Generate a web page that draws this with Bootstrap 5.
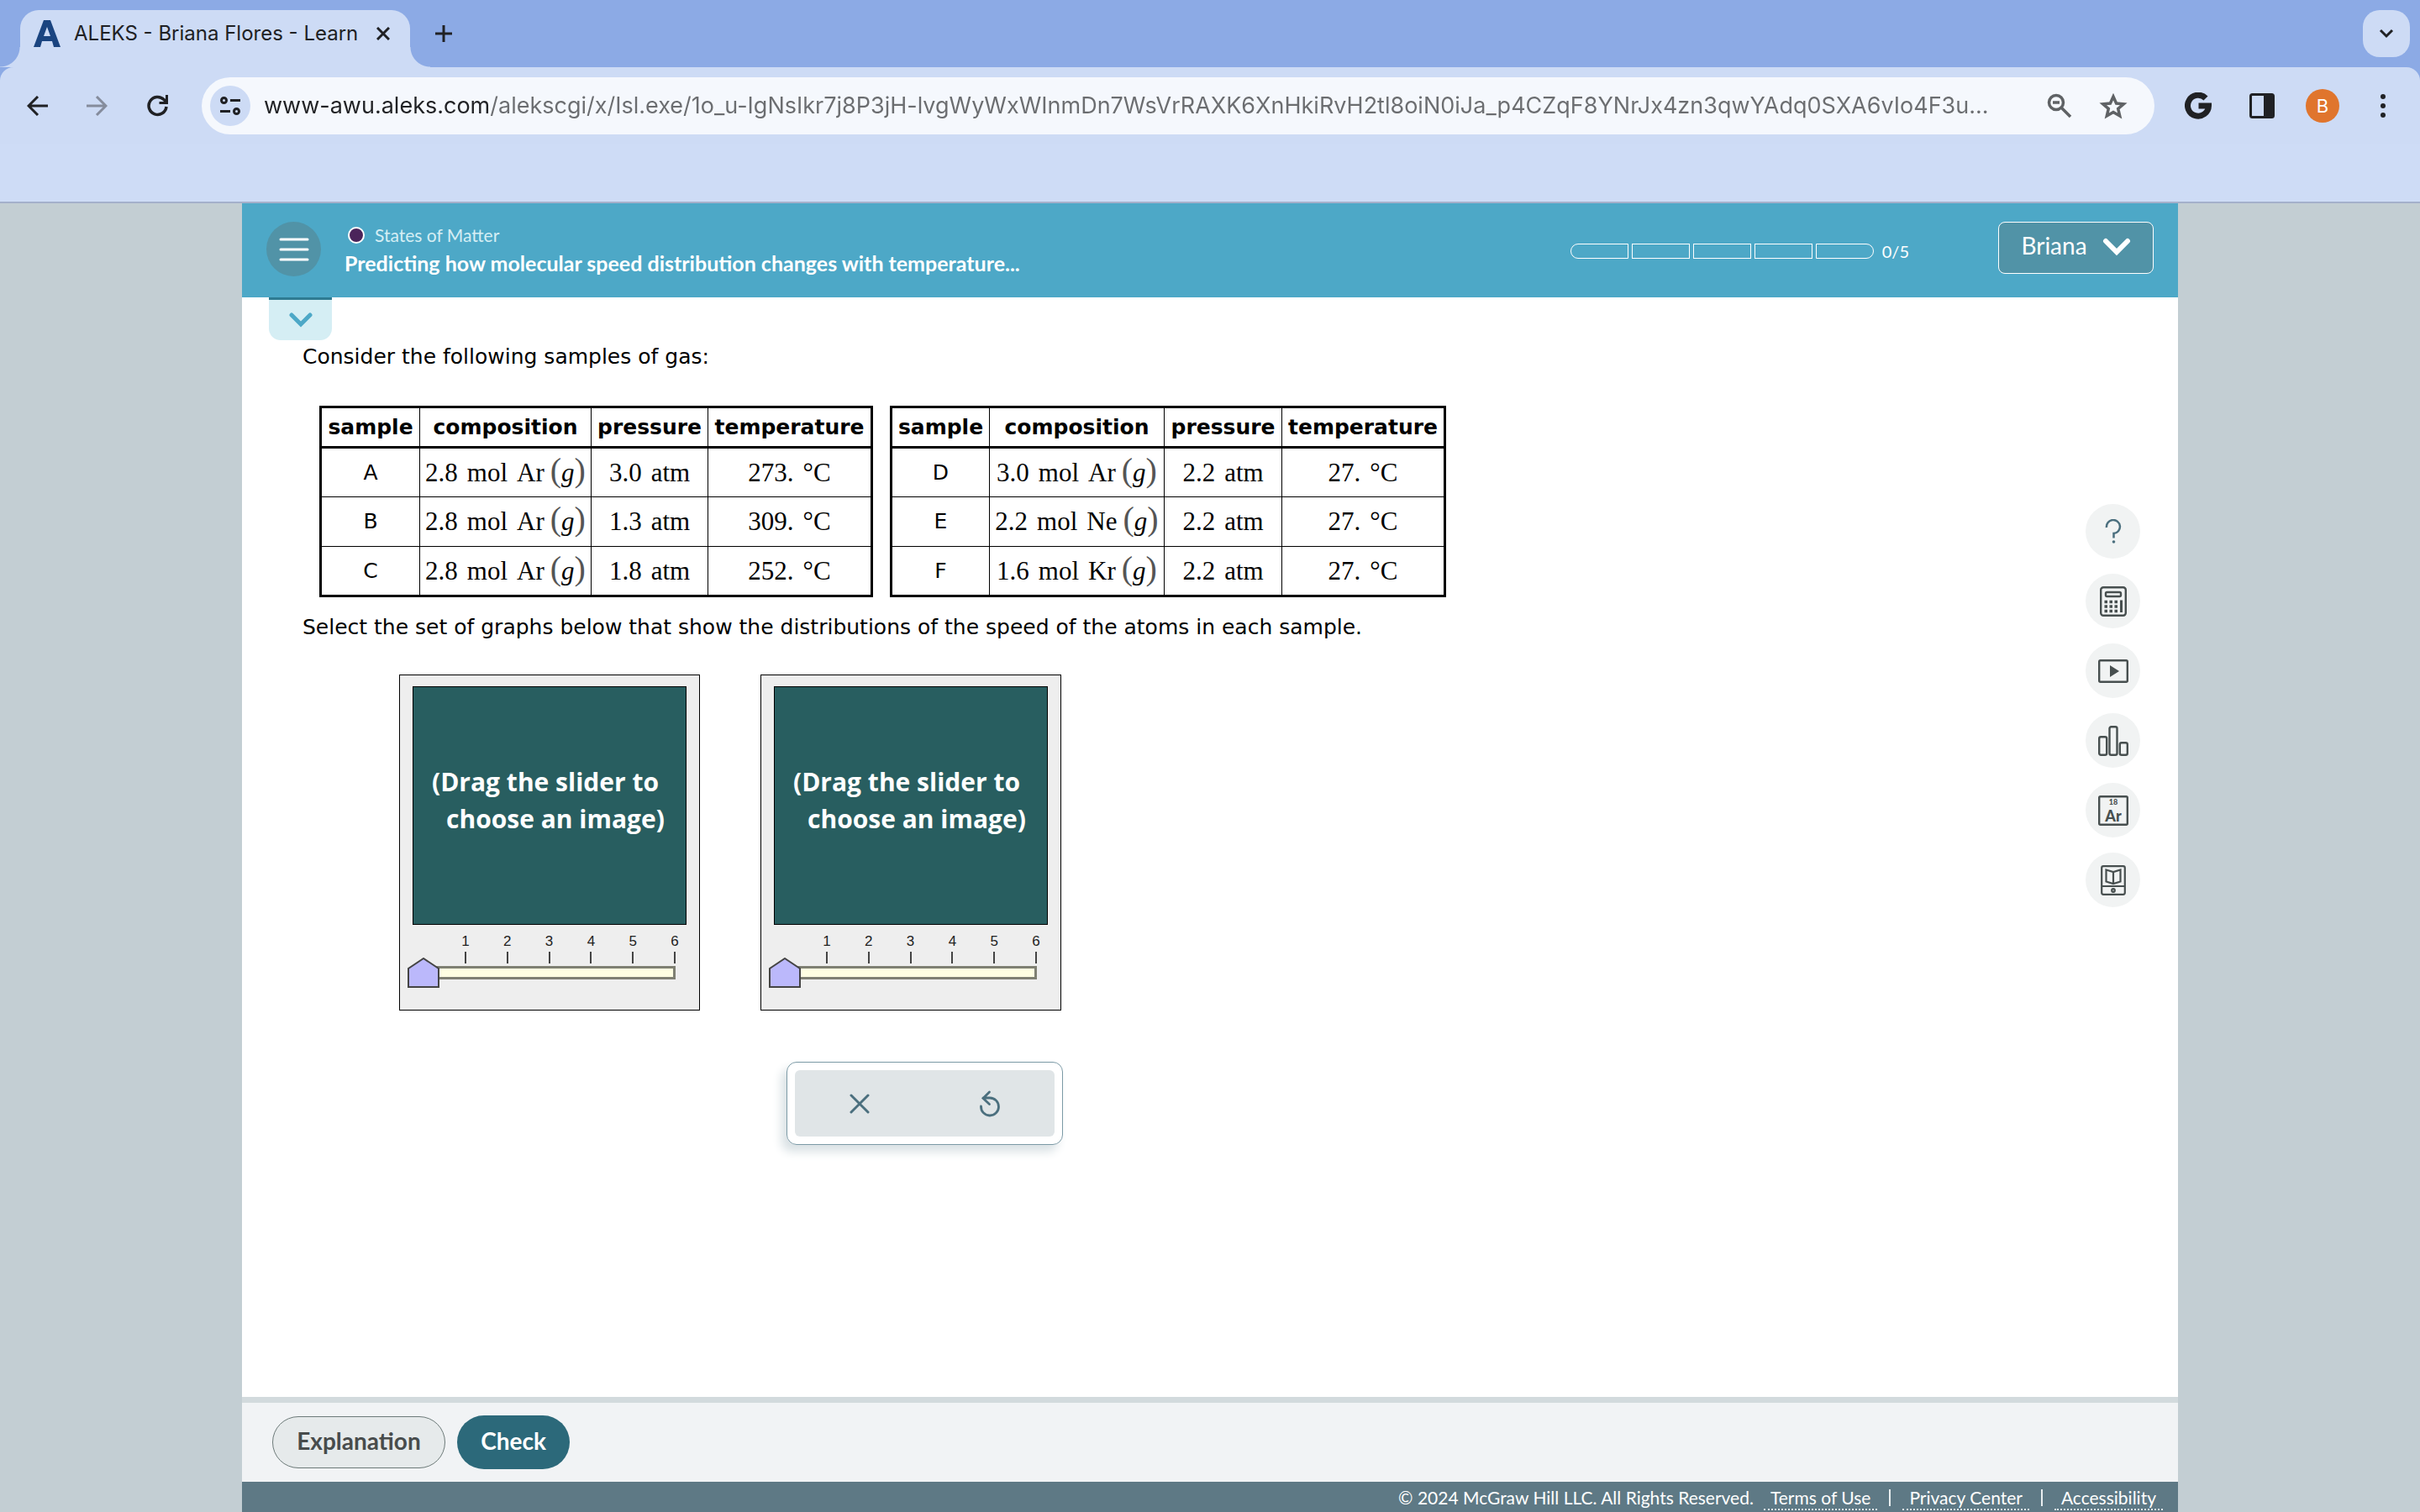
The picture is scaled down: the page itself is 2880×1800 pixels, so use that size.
<!DOCTYPE html>
<html lang="en">
<head>
<meta charset="utf-8">
<meta name="viewport" content="width=device-width, initial-scale=1">
<title>ALEKS - Briana Flores - Learn</title>
<link href="https://cdn.jsdelivr.net/npm/bootstrap@5.3.0/dist/css/bootstrap.min.css" rel="stylesheet">
<style>
  :root { --strip:#8caae5; --chrome:#cddbf5; --ink:#202124; --teal:#4da8c7; --slate:#4b6f7e; }
  body { background:#c3ced3; font-family:Lato, sans-serif; }
  svg { display:block; fill:none; }
  button { border:0; padding:0; background:none; color:inherit; }

  /* browser window */
  .tab-strip { background:var(--strip); height:80px; padding:12px 12px 0 24px; }
  .browser-tab { position:relative; height:68px; width:464px; padding:0 24px 12px 16px; background:var(--chrome); border-radius:22px 22px 0 0; font:24px/32px Inter, sans-serif; color:var(--ink); }
  .browser-tab::before, .browser-tab::after { content:""; position:absolute; bottom:0; width:24px; height:24px; }
  .browser-tab::before { right:100%; background:radial-gradient(circle at 0 0, transparent 23px, var(--chrome) 24px); }
  .browser-tab::after { left:100%; background:radial-gradient(circle at 100% 0, transparent 23px, var(--chrome) 24px); }
  .new-tab { margin:18px 0 0 30px; height:20px; }
  .tab-search { width:56px; height:56px; border-radius:20px; background:var(--chrome); }
  .toolbar-wrap { background:var(--strip); }
  .toolbar { background:var(--chrome); border-radius:16px 16px 0 0; height:92px; padding:12px 41px 12px 32px; }
  .forward-btn { margin-left:46px; }
  .reload-btn { margin-left:47px; }
  .panel-btn { margin-left:45px; }
  .menu-btn { margin-left:49px; }
  .address { height:68px; border-radius:34px; background:#f5f8fd; padding:0 32px 0 10px; margin:0 36px 0 38px; min-width:0; }
  .site-info { width:48px; height:48px; border-radius:50%; background:var(--chrome); }
  .url { min-width:0; border:0; outline:0; padding:0 0 0 16px; font:27px/40px Inter, sans-serif; color:transparent; background:linear-gradient(to right, var(--ink) 286px, #6b6d70 286px); -webkit-background-clip:text; background-clip:text; }
  .avatar { width:40px; height:40px; margin-left:37px; border-radius:50%; background:#e0752d; color:#fff; font:22px/40px Inter, sans-serif; }
  .bookmarks { background:#cedcf6; height:70px; border-bottom:2px solid #a4b0cb; }

  /* lesson */
  .lesson { width:80%; min-height:0; }
  .lesson-head { background:var(--teal); height:112px; padding:22px 29px 0; }
  .round-menu { width:65px; height:65px; border-radius:50%; background:#5193a7; }
  .titles { margin:3px 0 0 28px; }
  .topic-line { font-size:21px; line-height:26px; gap:12px; padding-left:4px; color:#d5eef4; }
  .topic-dot { width:20px; height:20px; border:2px solid #fff; border-radius:50%; background:#4b245a; }
  .lesson-name { font-size:25px; line-height:34px; font-weight:700; margin:3px 0 0; color:#fff; }
  .steps { gap:4px; margin:26px 106px 0 0; color:#fff; }
  .step { width:69px; height:18px; border:1px solid #fff; }
  .step:first-child { border-radius:9px 0 0 9px; }
  .step:nth-child(5) { border-radius:0 9px 9px 0; }
  .step-count { font-size:20px; line-height:18px; margin-left:6px; }
  .user-btn { width:185px; height:62px; padding-bottom:6px; gap:18px; border:1px solid #fff; border-radius:8px; background:#5193a7; color:#fff; font-size:28px; }
  .work { background:#fff; min-height:0; }
  .pull { width:75px; height:51px; margin-left:32px; background:#d5eef4; border-top:3px solid #2f7b92; border-radius:0 0 14px 14px; }
  .question { padding-left:72px; font:25px/32px "DejaVu Sans", sans-serif; color:#000; }
  .question p { margin:0; }
  .intro { padding-top:4px; }
  .samples { gap:20px; margin:42px 0 20px 20px; }
  .sample-table { border-collapse:collapse; table-layout:fixed; border:3px solid #000; text-align:center; }
  .sample-table th, .sample-table td { border:1px solid #000; padding:0; white-space:nowrap; }
  .sample-table th { height:48px; font-weight:700; text-align:center; border-bottom:3px solid #000; }
  .sample-table tbody th { height:59px; font-weight:400; border-bottom:1px solid #000; }
  .sample-table tbody tr:last-child > * { border-bottom:3px solid #000; }
  .chem { display:inline-flex; align-items:baseline; gap:11px; font:31px/40px "Liberation Serif", serif; }
  .state { margin-left:-4px; }
  .state b { font-weight:400; font-size:40px; line-height:30px; color:#555; }
  .choices { gap:72px; margin:40px 0 0 115px; }
  .picker { width:358px; height:400px; border:1px solid #000; background:#eee; padding:13px 0 0; }
  .board { margin:0 15px; height:284px; border:1px solid #000; background:#285e60; color:#fff; padding:91px 0 0 22px; font:700 30px/44px "Open Sans", sans-serif; white-space:nowrap; }
  .board span { display:block; }
  .board span + span { padding-left:17px; }
  .scale { display:grid; grid-template-columns:repeat(6, 1fr); width:299px; margin:12px 0 0 53px; font:17px/16px "Liberation Sans", sans-serif; color:#222; text-align:center; }
  .scale span::after { content:""; display:block; width:2px; height:14px; margin:4px auto 0; background:#444; }
  .picker input { -webkit-appearance:none; appearance:none; display:block; width:338px; height:36px; margin:-7px 0 0 9px; background:none; position:relative; }
  .picker input::-webkit-slider-runnable-track { height:36px; background:linear-gradient(#ffffe2,#ffffe2) center/294px 10px no-repeat, linear-gradient(#7f8073,#7f8073) center/300px 16px no-repeat; }
  .picker input::-webkit-slider-thumb { -webkit-appearance:none; width:38px; height:36px; background:url("data:image/svg+xml,%3Csvg xmlns='http://www.w3.org/2000/svg' width='38' height='36'%3E%3Cpath d='M1 35V13L19 1l18 12v22z' fill='%23bbb8fb' stroke='%23444' stroke-width='2'/%3E%3C/svg%3E"); }
  .actions { width:329px; height:99px; margin:61px 0 0 576px; padding:9px; border:1px solid #7c9aa6; border-radius:12px; box-shadow:-6px 8px 12px #d9e1e4; }
  .actions > div { height:79px; border-radius:6px; background:#e0e5e7; }
  .rail { gap:18px; margin:246px 45px 0 auto; }
  .rail button { width:65px; height:65px; border-radius:50%; background:#f1f3f3; }
  .submit-bar { height:101px; border-top:7px solid #d2dadd; background:#f1f3f5; padding:0 36px; gap:14px; }
  .pill { border-radius:32px; font-size:28px; font-weight:700; line-height:32px; padding:12px 26px 16px; }
  .pill-light { border:1px solid #6d7a79; background:#e6eaeb; color:#484c4c; min-width:206px; }
  .pill-dark { background:#2c697a; color:#fff; height:64px; min-width:134px; }
  .legal { height:36px; background:#5e7985; color:#fff; padding:6px 18px 0; font-size:21px; line-height:26px; }
  .legal a { color:#fff; text-decoration:none; border-bottom:2px dotted #dfe6e8; padding:0 8px; height:28px; }
  .legal i { width:2px; height:20px; background:#e8eef0; margin:3px 14px 0; }
</style>
</head>
<body class="vh-100 overflow-hidden d-flex flex-column">

<header>
  <div class="tab-strip d-flex align-items-start">
    <div class="browser-tab d-flex align-items-center">
      <svg class="flex-shrink-0" width="32" height="32" viewBox="0 0 32 32"><path d="M12 0h8l12 32h-8l-2-7H10l-2 7H0zM16 8l-4 11h8z" fill="#1a4480" fill-rule="evenodd"/></svg>
      <span class="text-nowrap ms-3">ALEKS - Briana Flores - Learn</span>
      <button class="ms-auto" aria-label="Close tab"><svg width="16" height="16" viewBox="0 0 16 16"><path d="M1 1l14 14M15 1L1 15" stroke="#202124" stroke-width="3"/></svg></button>
    </div>
    <button class="new-tab" aria-label="New tab"><svg width="20" height="20"><path d="M10 0v20M0 10h20" stroke="#202124" stroke-width="3"/></svg></button>
    <button class="tab-search ms-auto d-flex align-items-center justify-content-center" aria-label="Search tabs"><svg width="18" height="12"><path d="M2 2l7 7 7-7" stroke="#202124" stroke-width="3"/></svg></button>
  </div>
  <div class="toolbar-wrap">
    <div class="toolbar d-flex align-items-center">
      <button aria-label="Back"><svg width="25" height="24"><path d="M25 12H3M13 1L2 12l11 11" stroke="#202124" stroke-width="3"/></svg></button>
      <button class="forward-btn" aria-label="Forward"><svg width="25" height="24"><path d="M0 12h22M12 1l11 11-11 11" stroke="#858c9c" stroke-width="3"/></svg></button>
      <button class="reload-btn" aria-label="Reload"><svg width="27" height="26" viewBox="0 0 27 26"><path d="M23 14A10.500 10.500 0 1 1 20 5.500l3 3" stroke="#202124" stroke-width="3.500"/><path d="M25 0v11H14.500V8H22V0z" fill="#202124"/></svg></button>
      <div class="address d-flex align-items-center flex-fill">
        <button class="site-info d-flex align-items-center justify-content-center flex-shrink-0" aria-label="Site information"><svg width="24" height="22"><circle cx="4.500" cy="4.500" r="3" stroke="#202124" stroke-width="3"/><circle cx="19.500" cy="17.500" r="3" stroke="#202124" stroke-width="3"/><path d="M12 4.500h12M0 17.500h12" stroke="#202124" stroke-width="3"/></svg></button>
        <input class="url flex-fill" type="text" aria-label="Address" value="www-awu.aleks.com/alekscgi/x/Isl.exe/1o_u-IgNsIkr7j8P3jH-lvgWyWxWInmDn7WsVrRAXK6XnHkiRvH2tl8oiN0iJa_p4CZqF8YNrJx4zn3qwYAdq0SXA6vIo4F3u...">
        <button class="me-4 ms-3" aria-label="Zoom"><svg width="30" height="30"><circle cx="11" cy="11" r="8.500" stroke="#5f6265" stroke-width="3.500"/><path d="M17 17l11 11M7 11h8" stroke="#5f6265" stroke-width="3.500"/></svg></button>
        <button class="ms-2" aria-label="Bookmark"><svg width="34" height="32" viewBox="0 0 34 32"><path d="M17 5l3.600 8 8.700.8-6.600 5.700 2 8.500-7.700-4.500L9.300 28l2-8.500-6.600-5.700 8.700-.8z" stroke="#5f6265" stroke-width="3.500"/></svg></button>
      </div>
      <button aria-label="Google"><svg width="32" height="32"><path d="M25 7A12.500 12.500 0 1 0 28.500 16H16.500" stroke="#202124" stroke-width="7"/></svg></button>
      <button class="panel-btn" aria-label="Side panel"><svg width="30" height="30"><rect x="1.500" y="1.500" width="27" height="27" rx="2" stroke="#202124" stroke-width="3"/><path d="M17 1h10v28H17z" fill="#202124"/></svg></button>
      <button class="avatar text-center" aria-label="Profile">B</button>
      <button class="menu-btn" aria-label="Menu"><svg width="6" height="28"><g fill="#202124"><circle cx="3" cy="3" r="3"/><circle cx="3" cy="14" r="3"/><circle cx="3" cy="25" r="3"/></g></svg></button>
    </div>
  </div>
  <div class="bookmarks"></div>
</header>

<div class="lesson mx-auto flex-fill d-flex flex-column">
  <div class="lesson-head d-flex align-items-start">
    <button class="round-menu d-flex align-items-center justify-content-center" aria-label="Menu"><svg width="36" height="28"><path d="M2 2h32M2 14h32M2 26h32" stroke="#fff" stroke-width="3" stroke-linecap="round"/></svg></button>
    <div class="titles">
      <div class="topic-line d-flex align-items-center"><span class="topic-dot"></span><span>States of Matter</span></div>
      <h1 class="lesson-name">Predicting how molecular speed distribution changes with temperature...</h1>
    </div>
    <div class="steps d-flex ms-auto">
      <span class="step"></span><span class="step"></span><span class="step"></span><span class="step"></span><span class="step"></span>
      <span class="step-count">0/5</span>
    </div>
    <button class="user-btn d-flex align-items-center justify-content-center">Briana <svg class="mt-1" width="34" height="22"><path d="M4 4l13 13L30 4" stroke="#fff" stroke-width="6" stroke-linecap="round"/></svg></button>
  </div>

  <main class="work flex-fill d-flex">
    <div>
      <button class="pull d-flex align-items-center justify-content-center" aria-label="Show details"><svg width="28" height="18"><path d="M3 3l11 11L25 3" stroke="#4da8c7" stroke-width="5" stroke-linecap="round"/></svg></button>
      <div class="question">
        <p class="intro">Consider the following samples of gas:</p>
        <div class="samples d-flex">
          <table class="sample-table">
            <colgroup><col style="width:118px"><col style="width:204px"><col style="width:139px"><col style="width:195px"></colgroup>
            <thead><tr><th>sample</th><th>composition</th><th>pressure</th><th>temperature</th></tr></thead>
            <tbody>
              <tr><th>A</th><td><span class="chem"><span>2.8</span> <span>mol</span> <span>Ar</span> <span class="state"><b>(</b><em>g</em><b>)</b></span></span></td><td><span class="chem"><span>3.0</span> <span>atm</span></span></td><td><span class="chem"><span>273.</span> <span>°C</span></span></td></tr>
              <tr><th>B</th><td><span class="chem"><span>2.8</span> <span>mol</span> <span>Ar</span> <span class="state"><b>(</b><em>g</em><b>)</b></span></span></td><td><span class="chem"><span>1.3</span> <span>atm</span></span></td><td><span class="chem"><span>309.</span> <span>°C</span></span></td></tr>
              <tr><th>C</th><td><span class="chem"><span>2.8</span> <span>mol</span> <span>Ar</span> <span class="state"><b>(</b><em>g</em><b>)</b></span></span></td><td><span class="chem"><span>1.8</span> <span>atm</span></span></td><td><span class="chem"><span>252.</span> <span>°C</span></span></td></tr>
            </tbody>
          </table>
          <table class="sample-table">
            <colgroup><col style="width:117px"><col style="width:208px"><col style="width:140px"><col style="width:194px"></colgroup>
            <thead><tr><th>sample</th><th>composition</th><th>pressure</th><th>temperature</th></tr></thead>
            <tbody>
              <tr><th>D</th><td><span class="chem"><span>3.0</span> <span>mol</span> <span>Ar</span> <span class="state"><b>(</b><em>g</em><b>)</b></span></span></td><td><span class="chem"><span>2.2</span> <span>atm</span></span></td><td><span class="chem"><span>27.</span> <span>°C</span></span></td></tr>
              <tr><th>E</th><td><span class="chem"><span>2.2</span> <span>mol</span> <span>Ne</span> <span class="state"><b>(</b><em>g</em><b>)</b></span></span></td><td><span class="chem"><span>2.2</span> <span>atm</span></span></td><td><span class="chem"><span>27.</span> <span>°C</span></span></td></tr>
              <tr><th>F</th><td><span class="chem"><span>1.6</span> <span>mol</span> <span>Kr</span> <span class="state"><b>(</b><em>g</em><b>)</b></span></span></td><td><span class="chem"><span>2.2</span> <span>atm</span></span></td><td><span class="chem"><span>27.</span> <span>°C</span></span></td></tr>
            </tbody>
          </table>
        </div>
        <p>Select the set of graphs below that show the distributions of the speed of the atoms in each sample.</p>
        <div class="choices d-flex">
          <div class="picker">
            <label class="board d-block" for="set1"><span>(Drag the slider to</span><span>choose an image)</span></label>
            <div class="scale"><span>1</span><span>2</span><span>3</span><span>4</span><span>5</span><span>6</span></div>
            <input id="set1" type="range" min="0" max="6" value="0">
          </div>
          <div class="picker">
            <label class="board d-block" for="set2"><span>(Drag the slider to</span><span>choose an image)</span></label>
            <div class="scale"><span>1</span><span>2</span><span>3</span><span>4</span><span>5</span><span>6</span></div>
            <input id="set2" type="range" min="0" max="6" value="0">
          </div>
        </div>
        <div class="actions">
          <div class="d-flex">
            <button class="w-50 d-flex align-items-center justify-content-center" aria-label="Clear"><svg width="24" height="24"><path d="M2 2l20 20M22 2L2 22" stroke="#4b6f7e" stroke-width="3" stroke-linecap="round"/></svg></button>
            <button class="w-50 d-flex align-items-center justify-content-center" aria-label="Undo"><svg width="26" height="32"><path d="M2.500 19A10.500 10.500 0 1 0 13 9H5M12.500 2L5 9.500l7.500 7" stroke="#4b6f7e" stroke-width="2.800" stroke-linecap="round"/></svg></button>
          </div>
        </div>
      </div>
    </div>
    <nav class="rail d-flex flex-column" aria-label="Tools">
      <button class="d-flex align-items-center justify-content-center" aria-label="Help"><svg width="20" height="30"><path d="M2 10a8 8 0 1 1 8.500 7v5.500" stroke="#4b6f7e" stroke-width="2.500"/><circle cx="10.500" cy="27" r="1.800" fill="#4b6f7e"/></svg></button>
      <button class="d-flex align-items-center justify-content-center" aria-label="Calculator"><svg width="32" height="36"><g stroke="#474f4f"><rect x="1.200" y="1.200" width="29.600" height="33.600" rx="3" stroke-width="2.400"/><rect x="7" y="7" width="18" height="5" rx="1.500" stroke-width="2.400"/><path d="M5.500 18.500H9M11.500 18.500H15M17.500 18.500H21M5.500 24H9M11.500 24H15M17.500 24H21M5.500 29.500H9M11.500 29.500H15M17.500 29.500H21" stroke-width="3.500"/><path d="M25.500 16.500v14.500" stroke-width="3"/></g></svg></button>
      <button class="d-flex align-items-center justify-content-center" aria-label="Video"><svg width="36" height="28"><rect x="1.200" y="1.200" width="33.600" height="25.600" rx="1.500" stroke="#474f4f" stroke-width="2.400"/><path d="M14 7l11 7-11 7z" fill="#474f4f"/></svg></button>
      <button class="d-flex align-items-center justify-content-center" aria-label="Data"><svg width="36" height="36"><g stroke="#474f4f" stroke-width="2.400"><rect x="1.200" y="13.200" width="9" height="21.600" rx="2"/><rect x="13.500" y="1.200" width="9" height="33.600" rx="2"/><rect x="25.800" y="20.200" width="9" height="14.600" rx="2"/></g></svg></button>
      <button class="d-flex align-items-center justify-content-center" aria-label="Periodic table"><svg width="36" height="36"><rect x="1.200" y="1.200" width="33.600" height="33.600" rx="1.500" stroke="#474f4f" stroke-width="2.400"/><g fill="#474f4f" text-anchor="middle" font-family="Lato, sans-serif" font-weight="900"><text x="18" y="11" font-size="9">18</text><text x="18" y="31" font-size="18">Ar</text></g></svg></button>
      <button class="d-flex align-items-center justify-content-center" aria-label="Dictionary"><svg width="30" height="36"><g stroke="#474f4f" stroke-width="2.200"><rect x="1.200" y="1.200" width="27.600" height="33.600" rx="2"/><path d="M1 25h28M6.500 5.500L15 8l8.500-2.500v14L15 22l-8.500-2.500zM15 8v14"/><circle cx="15" cy="30" r="1.800"/></g></svg></button>
    </nav>
  </main>

  <div class="submit-bar d-flex align-items-center">
    <button class="pill pill-light">Explanation</button>
    <button class="pill pill-dark">Check</button>
  </div>
  <footer class="legal d-flex justify-content-end">
    <span class="me-2 pe-1">© 2024 McGraw Hill LLC. All Rights Reserved.</span>
    <a href="#">Terms of Use</a><i></i><a href="#">Privacy Center</a><i></i><a href="#">Accessibility</a>
  </footer>
</div>
<script src="https://cdn.jsdelivr.net/npm/bootstrap@5.3.0/dist/js/bootstrap.bundle.min.js"></script>
</body>
</html>
